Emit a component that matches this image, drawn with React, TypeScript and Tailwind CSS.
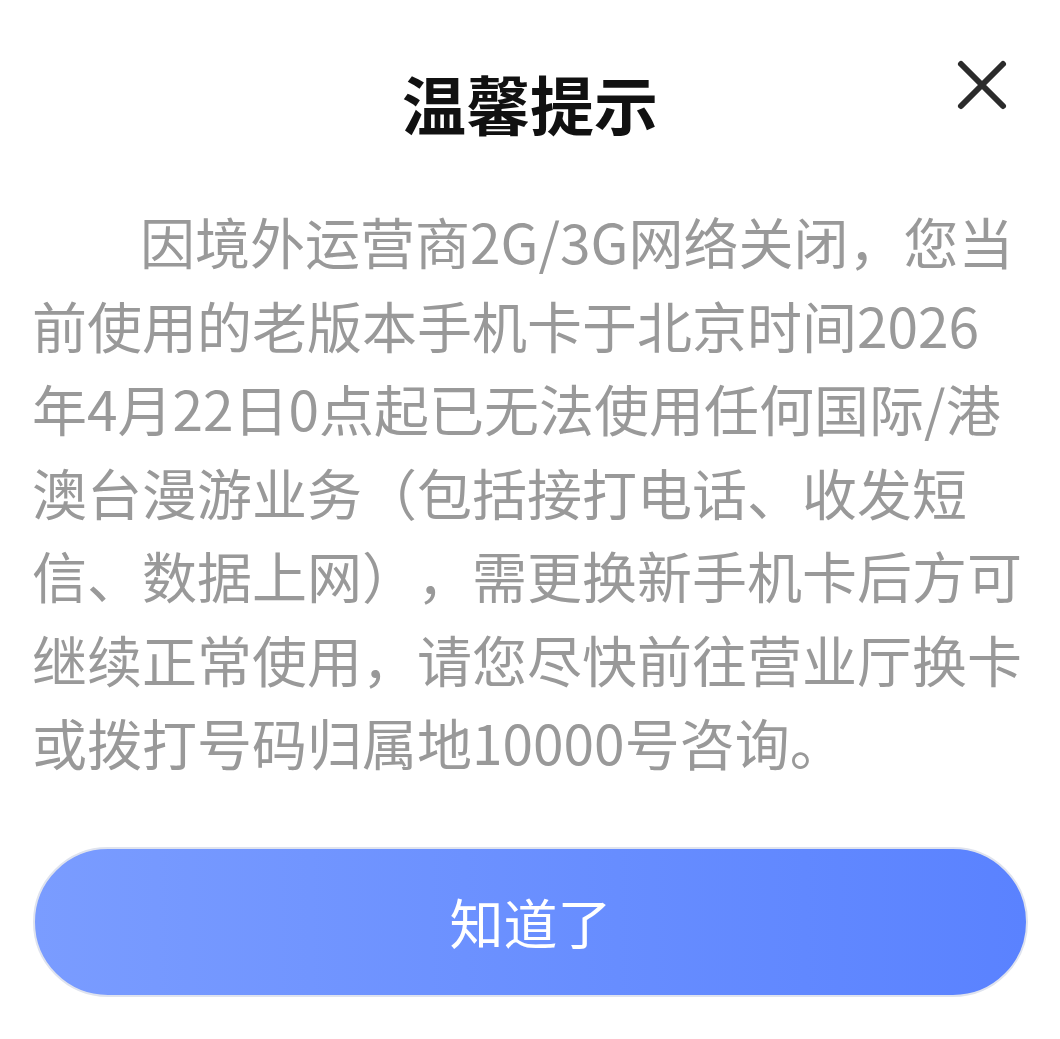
const lines = [
  "因境外运营商2G/3G网络关闭，您当",
  "前使用的老版本手机卡于北京时间2026",
  "年4月22日0点起已无法使用任何国际/港",
  "澳台漫游业务（包括接打电话、收发短",
  "信、数据上网），需更换新手机卡后方可",
  "继续正常使用，请您尽快前往营业厅换卡",
  "或拨打号码归属地10000号咨询。",
];

export default function App() {
  return (
    <div
      className="relative h-[1039px] w-[1060px] overflow-hidden bg-white"
      style={{ fontFamily: '"Noto Sans CJK SC", "Noto Sans", sans-serif' }}
    >
      <button className="absolute right-[52px] top-[59px] flex h-[52px] w-[52px] items-center justify-center">
        <svg width="52" height="52" viewBox="0 0 52 52" fill="none">
          <path
            d="M5 5L47 47M47 5L5 47"
            stroke="#2b2b2b"
            strokeWidth="6"
            strokeLinecap="round"
          />
        </svg>
      </button>

      <div className="flex flex-col px-[33px] pt-[54px]">
        <h1 className="text-center text-[64px] font-bold leading-[96px] text-[#111]">
          温馨提示
        </h1>

        <div className="-ml-[1px] mt-[49px] text-[55px] leading-[83.5px] text-[#999999] [text-spacing-trim:space-all]">
          {lines.map((line, idx) => (
            <div
              key={idx}
              className={idx === 0 ? "whitespace-nowrap pl-[108px]" : "whitespace-nowrap"}
            >
              {line}
            </div>
          ))}
        </div>

        <button className="mt-[63px] flex h-[150px] w-[995px] items-center justify-center rounded-full border-2 border-[#dfe3ee] bg-gradient-to-r from-[#7a9cff] to-[#5a82ff] text-[54px] text-white">
          知道了
        </button>
      </div>
    </div>
  );
}
